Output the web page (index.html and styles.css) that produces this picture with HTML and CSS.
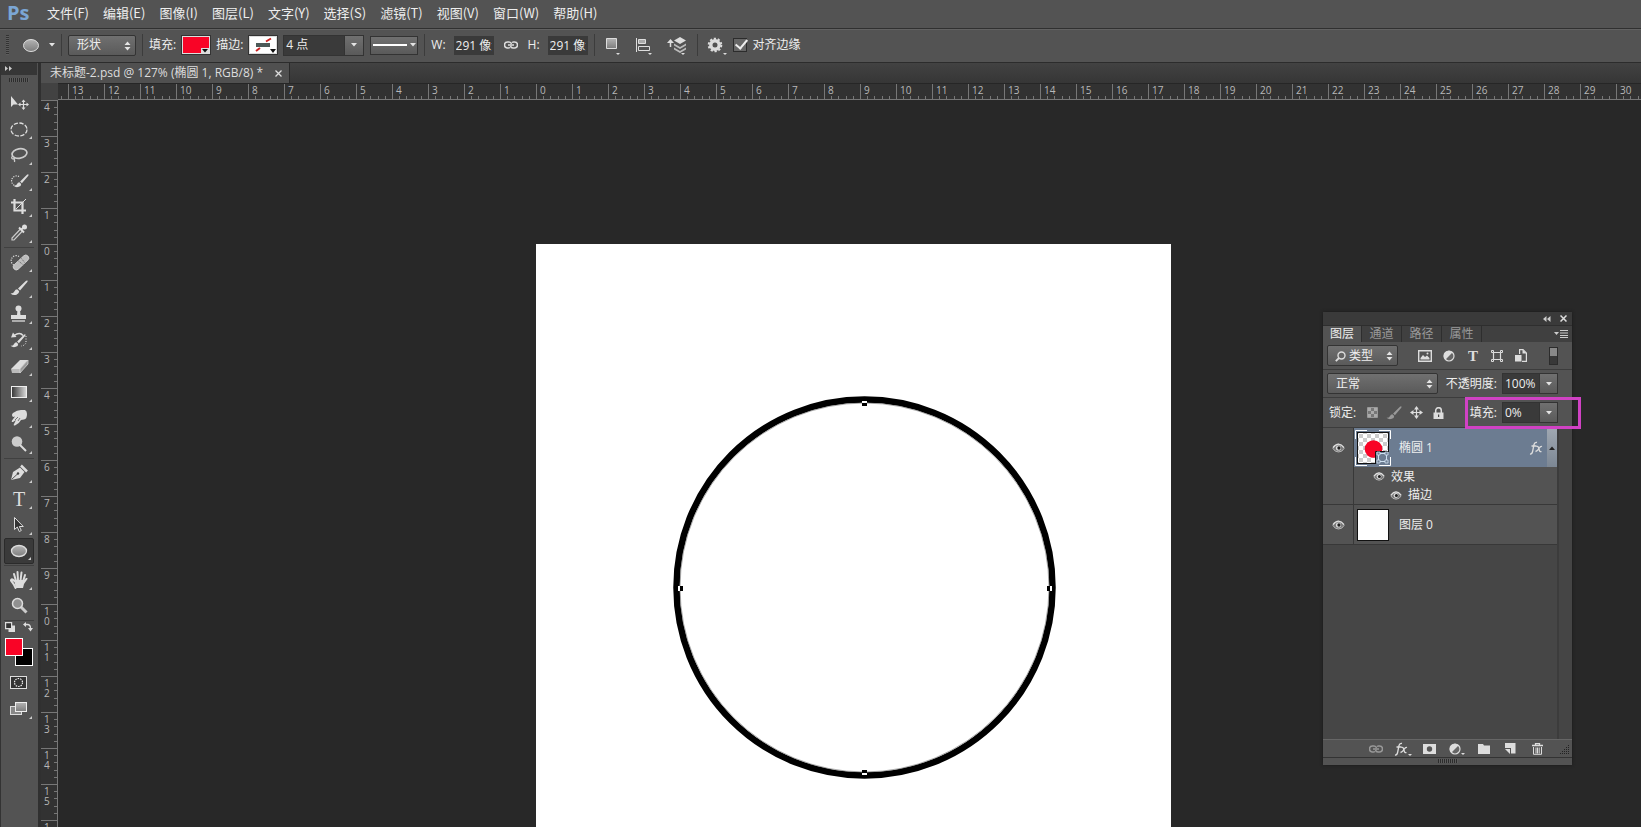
FILE: index.html
```
<!DOCTYPE html>
<html lang="zh-CN">
<head>
    <meta charset="UTF-8">
    <meta name="viewport" content="width=device-width, initial-scale=1.0">
    <title>未标题-2.psd</title>
    <link rel="stylesheet" href="styles.css">
</head>
<body>
    <!-- shared symbols -->
    <svg class="defs" width="0" height="0" aria-hidden="true">
        <defs>
            <linearGradient id="shade" x1="0" y1="0" x2="0" y2="1">
                <stop offset="0" stop-color="#b4b4b4"/><stop offset="1" stop-color="#7c7c7c"/>
            </linearGradient>
            <linearGradient id="ramp" x1="0" y1="0" x2="1" y2="0">
                <stop offset="0" stop-color="#333"/><stop offset="1" stop-color="#ddd"/>
            </linearGradient>
            <pattern id="checker" width="8" height="8" patternUnits="userSpaceOnUse">
                <rect width="8" height="8" fill="#fff"/><path d="M0 0h4v4H0zM4 4h4v4H4z" fill="#ccc"/>
            </pattern>
        </defs>
        <symbol id="updown" viewBox="0 0 7 10"><path d="M0.5 4L3.5 0.5 6.5 4zM0.5 6L3.5 9.5 6.5 6z" fill="#e4e4e4"/></symbol>
        <symbol id="caret" viewBox="0 0 6 4"><path d="M0 0h6L3 3.6z" fill="#e4e4e4"/></symbol>
        <symbol id="eye" viewBox="0 0 14 10">
            <path d="M1 5.500Q3 1 7 1t6 4.500Q11 9.300 7 9.300T1 5.500z" fill="#777" stroke="#bbb"/>
            <path d="M1 4.500Q4 .800 7 .800t6 3.700" fill="none" stroke="#ddd" stroke-width="1.400"/>
            <circle cx="7" cy="5" r="2.800" fill="#ddd"/><circle cx="7.500" cy="5" r="1.800" fill="#222"/>
        </symbol>
        <symbol id="link" viewBox="0 0 14 8">
            <path d="M6 6.500A3 3 0 0 1 4 7H3.500a3 3 0 0 1 0-6H5q2 0 2.500 2M8 1.500A3 3 0 0 1 10 1h.5a3 3 0 0 1 0 6H9Q7 7 6.500 5M4 4h6" fill="none" stroke="currentColor" stroke-width="1.500"/>
        </symbol>
        <symbol id="fx" viewBox="0 0 14 14">
            <path d="M1 13q2 .3 2.600-2.500L5 3.500Q5.600 1 8 1.500M2.500 5h5M7.500 5.500q1.500-.5 2 1.200l1 3q.5 1.500 2 .8M13 5.500q-1.500-.5-3 2T6.500 10.500" fill="none" stroke="currentColor" stroke-width="1.300"/>
        </symbol>
        <symbol id="halfcircle" viewBox="0 0 12 12">
            <circle cx="6" cy="6" r="5" fill="#666" stroke="#ddd" stroke-width="1.200"/><path d="M9.700 2.300A5.200 5.200 0 1 0 2.300 9.700z" fill="#ddd"/>
        </symbol>
        <symbol id="brush" viewBox="0 0 18 16">
            <path d="M17.500.500q-1-.3-1.700.400L8 8.500l2 2 7.300-8.600q.6-.7.200-1.400zM7.200 9.300q-2 .1-2.700 2Q3.500 13.600.500 13.500q2.500 2.300 6 1.200 2.700-.8 2.700-3.400z" fill="currentColor"/>
        </symbol>
    </svg>

    <header class="menubar">
        <span class="logo">Ps</span>
        <nav>
            <button>文件(F)</button>
            <button>编辑(E)</button>
            <button>图像(I)</button>
            <button>图层(L)</button>
            <button>文字(Y)</button>
            <button>选择(S)</button>
            <button>滤镜(T)</button>
            <button>视图(V)</button>
            <button>窗口(W)</button>
            <button>帮助(H)</button>
        </nav>
    </header>

    <div class="options">
        <span class="grip-v"></span>
        <button class="preset" aria-label="椭圆工具预设">
            <svg width="16" height="13" viewBox="0 0 16 13"><ellipse cx="8" cy="6.500" rx="7.500" ry="6" fill="url(#shade)" stroke="#ddd"/></svg>
            <svg width="6" height="4"><use href="#caret"/></svg>
        </button>
        <span class="sep"></span>
        <span class="select mode">
            <select aria-label="工具模式"><option>形状</option></select>
            <svg width="7" height="10"><use href="#updown"/></svg>
        </span>
        <span class="sep"></span>
        <span class="field">填充:
            <button class="swatch red" aria-label="填充颜色"><svg width="8" height="5" viewBox="0 0 8 5"><path d="M0 0h8v5H0z" fill="#ddd"/><path d="M1 1h6L4 4.500z" fill="#111"/></svg></button>
        </span>
        <span class="field">描边:
            <button class="swatch none" aria-label="描边颜色">
                <svg class="slash" width="26" height="16" viewBox="0 0 26 16"><path d="M6 14L10 11M16 4.500L21 1.500" stroke="#c22" stroke-width="2"/><path d="M6 6h14v4H6z" fill="#4c5a58"/></svg>
                <svg width="6" height="4"><path d="M0 0h6L3 4z" fill="#111"/></svg>
            </button>
        </span>
        <span class="combo stroke-width">
            <input type="text" value="4 点" aria-label="描边宽度">
            <button aria-label="选择宽度"><svg width="6" height="4"><use href="#caret"/></svg></button>
        </span>
        <button class="line-style" aria-label="描边类型"><i></i><svg width="6" height="4"><use href="#caret"/></svg></button>
        <span class="sep"></span>
        <label class="field size">W: <input type="text" value="291 像素"></label>
        <button class="plain" aria-label="链接"><svg class="light" width="14" height="8"><use href="#link"/></svg></button>
        <label class="field size">H: <input type="text" value="291 像素"></label>
        <span class="sep"></span>
        <button class="plain path-ops" aria-label="路径操作"><svg width="16" height="20" viewBox="0 0 16 20"><path d="M1.500 3.500h10v10h-10z" fill="url(#shade)" stroke="#ddd"/><path d="M11 18h4l-2 2z" fill="#ddd"/></svg></button>
        <button class="plain" aria-label="路径对齐"><svg width="18" height="20" viewBox="0 0 18 20"><path d="M1.500 3v14" stroke="#ddd"/><path d="M3.500 4.500h7v4h-7z" fill="#aaa" stroke="#ddd"/><path d="M3.500 11.500h11v4h-11z" fill="none" stroke="#ddd"/><path d="M13 18h4l-2 2z" fill="#ddd"/></svg></button>
        <button class="plain" aria-label="路径排列"><svg width="20" height="20" viewBox="0 0 20 20"><path d="M3.500 6v6" stroke="#ddd" stroke-width="1.500"/><path d="M0 8l3.500-4L7 8z" fill="#ddd"/><path d="M7 5.500l6-3.500 6 3.500L13 9z" fill="#ddd"/><path d="M7 8.500l6 3.500 6-3.500v2L13 14l-6-3.500zM7 12.500l6 3.500 6-3.500v2L13 18l-6-3.500z" fill="#bbb"/><path d="M14 18h4l-2 2z" fill="#ddd"/></svg></button>
        <span class="sep"></span>
        <button class="plain gear" aria-label="设置"><svg width="20" height="20" viewBox="0 0 20 20"><circle cx="8" cy="10" r="4.200" fill="none" stroke="#ddd" stroke-width="3.400"/><circle cx="8" cy="10" r="6.300" fill="none" stroke="#ddd" stroke-width="2" stroke-dasharray="2.200 1.760"/><path d="M16 18h4l-2 2z" fill="#ddd"/></svg></button>
        <label class="check"><input type="checkbox" checked>对齐边缘</label>
    </div>

    <div class="main">
        <aside class="tools">
            <div class="tools-head"><svg width="8" height="5" viewBox="0 0 8 5"><path d="M0 0l3 2.500L0 5zM4 0l3 2.500L4 5z" fill="#ccc"/></svg></div>
            <span class="grip-h"></span>
            <div class="group">
                <button class="flat" aria-label="移动工具"><svg viewBox="0 0 24 24"><path d="M4 5v11l2.500-2.500H11z" fill="#ddd"/><path d="M16.500 9v9M12 13.500h9" stroke="#ddd" stroke-width="1.200"/><path d="M14.500 11l2-2.500 2 2.500zM14.500 16.500l2 2.500 2-2.500zM13.500 11.500l-2.500 2 2.500 2zM19.500 11.500l2.500 2-2.500 2z" fill="#ddd"/></svg></button>
                <button aria-label="椭圆选框工具"><svg viewBox="0 0 24 24"><ellipse cx="12" cy="12.500" rx="8" ry="6.500" fill="none" stroke="#ddd" stroke-width="1.300" stroke-dasharray="4.200 1.500"/></svg></button>
                <button aria-label="套索工具"><svg viewBox="0 0 24 24"><ellipse cx="12.500" cy="10.500" rx="7.500" ry="4.700" transform="rotate(-10 12.500 10.500)" fill="none" stroke="#ccc" stroke-width="1.700"/><path d="M6 13q-2 1-1 2.500 1.500 1 3-.500M6.500 15q1.500 2 1 4" fill="none" stroke="#ccc" stroke-width="1.300"/></svg></button>
                <button aria-label="快速选择工具"><svg viewBox="0 0 24 24" color="#ddd"><path d="M12 7.500a5 5 0 1 0-1.500 9.300" fill="none" stroke="#ddd" stroke-width="1.200" stroke-dasharray="1.200 1.200"/><use href="#brush" x="6" y="5" width="16" height="14"/></svg></button>
                <button aria-label="裁剪工具"><svg viewBox="0 0 24 24"><path d="M7.500 4v11.500H19M4 7.500h11.500V19" fill="none" stroke="#ddd" stroke-width="2.200"/><path d="M9 14L19 4" stroke="#ddd"/></svg></button>
                <button aria-label="吸管工具"><svg viewBox="0 0 24 24"><path d="M13.500 8L5 17v2h2l8.500-9" fill="#555" stroke="#ccc" stroke-width="1.200"/><path d="M12 6.500l5 5M14 9l4.500-4.500" stroke="#ddd" stroke-width="2"/><circle cx="17.500" cy="6" r="2.500" fill="#ddd"/></svg></button>
            </div>
            <div class="group">
                <button aria-label="污点修复画笔工具"><svg viewBox="0 0 24 24"><path d="M12 6.500a5 5 0 1 0-4 9" fill="none" stroke="#ddd" stroke-width="1.200" stroke-dasharray="1.200 1.200"/><rect x="4.500" y="9.500" width="19" height="6" rx="3" transform="rotate(-43 14 12.500)" fill="#bcbcbc" stroke="#ddd" stroke-width=".7"/><path d="M11.500 11l5.500 4.500M14.500 8.500l3.500 4.500" stroke="#666" stroke-dasharray="1 1"/></svg></button>
                <button aria-label="画笔工具"><svg viewBox="0 0 24 24" color="#ddd"><use href="#brush" x="3" y="4" width="18" height="16"/></svg></button>
                <button aria-label="仿制图章工具"><svg viewBox="0 0 24 24"><circle cx="11.500" cy="6.500" r="3" fill="#ddd"/><path d="M10.500 8h2.500l.5 5h5.500v4H4v-4h6z" fill="#ddd"/><path d="M5 19h13" stroke="#ddd" stroke-width="1.300"/></svg></button>
                <button aria-label="历史记录画笔工具"><svg viewBox="0 0 24 24" color="#ddd"><path d="M7 7.500q6-4 9 0" fill="none" stroke="#ddd" stroke-width="1.500"/><path d="M4 9.500l2-5 3.500 4.500z" fill="#ddd"/><use href="#brush" x="3" y="6" width="16" height="14"/><path d="M19 8v7q-2 3-5 3" fill="none" stroke="#eee" stroke-dasharray="1 1.500"/></svg></button>
                <button aria-label="橡皮擦工具"><svg viewBox="0 0 24 24"><path d="M4 15l9-9h8l-8 9z" fill="#ddd"/><path d="M4 15h9v4H5z" fill="#bbb"/><path d="M13 15l8-9v4l-8 9z" fill="#999" stroke="#ddd" stroke-width=".7"/></svg></button>
                <button aria-label="渐变工具"><svg viewBox="0 0 24 24"><rect x="4.500" y="6.500" width="15" height="11" fill="url(#ramp)" stroke="#eee"/></svg></button>
                <button aria-label="涂抹工具"><svg viewBox="0 0 24 24"><path d="M6 7q4-3 8-3h4q2 1 2 4 0 5-3 5.500l-3 .5q-2 4-6 5.500-2 0-1-1.500l2-4-3 2q-2 .5-1-1.500l3-4-2 .5Q4 9 6 7z" fill="#ddd"/><path d="M8 14l3-3M11 15l2-3" stroke="#777"/></svg></button>
                <button aria-label="减淡工具"><svg viewBox="0 0 24 24"><circle cx="10" cy="9.500" r="5.300" fill="#ccc"/><path d="M13 13l6 6" stroke="#ddd" stroke-width="2"/></svg></button>
            </div>
            <div class="group">
                <button aria-label="钢笔工具"><svg viewBox="0 0 24 24"><path d="M4 19l2-8 7-4.500L17.500 11 13 17z" fill="#ddd"/><path d="M4.500 18.500L11 12.500" stroke="#555"/><circle cx="11" cy="12.500" r="1.200" fill="#444"/><path d="M14 4.500l6 6" stroke="#ddd" stroke-width="2.500"/></svg></button>
                <button class="type" aria-label="横排文字工具">T</button>
                <button aria-label="路径选择工具"><svg viewBox="0 0 24 24"><path d="M7.500 4.500v12l2.800-2.500 2 4.500 2-1-2-4h4z" fill="#333" stroke="#ddd"/></svg></button>
                <button class="active" aria-label="椭圆工具"><svg viewBox="0 0 24 24"><ellipse cx="12" cy="12" rx="7.500" ry="5.500" fill="url(#shade)" stroke="#ddd" stroke-width="1.300"/></svg></button>
            </div>
            <div class="group">
                <button aria-label="抓手工具"><svg viewBox="0 0 24 24"><path d="M8.500 20Q7 16 4 12.500q0-1.500 1.500-1L8 13.500M9 13L7 6M11 12.500l-.5-8.500M13.500 12.500l1-8M16 13.500l2-6.500" fill="none" stroke="#ddd" stroke-width="2" stroke-linecap="round"/><path d="M7.500 12h9.500l2-2q2-.5 1.500 1L17 16l-1 4H8.500z" fill="#ddd"/></svg></button>
                <button class="flat" aria-label="缩放工具"><svg viewBox="0 0 24 24"><path d="M14 13l5.500 5.500" stroke="#ccc" stroke-width="3"/><circle cx="10.500" cy="9.500" r="5" fill="#909090" stroke="#ddd" stroke-width="1.500"/></svg></button>
            </div>
            <div class="color-tools">
                <button aria-label="默认颜色"><svg width="10" height="10" viewBox="0 0 10 10"><path d="M3.500 3.500H10V10H3.500z" fill="#ddd"/><path d="M.6.600h6v6h-6z" fill="#333" stroke="#ddd" stroke-width="1.200"/></svg></button>
                <button aria-label="切换颜色"><svg width="10" height="10" viewBox="0 0 10 10"><path d="M2 2.500h2.500q3 0 3 4" fill="none" stroke="#ddd" stroke-width="1.300"/><path d="M3 0v5L0 2.500zM5 6h5L7.500 9.500z" fill="#ddd"/></svg></button>
            </div>
            <div class="colors">
                <button class="bg" aria-label="背景色"></button>
                <button class="fg" aria-label="前景色"></button>
            </div>
            <div class="group modes">
                <button class="flat" aria-label="快速蒙版"><svg viewBox="0 0 24 24"><rect x="3.500" y="5.500" width="16" height="12" fill="#333" stroke="#ddd"/><circle cx="11.500" cy="11.500" r="4" fill="none" stroke="#eee" stroke-width="1.200" stroke-dasharray="1.500 1"/></svg></button>
                <button aria-label="屏幕模式"><svg viewBox="0 0 24 24"><rect x="3.500" y="9.500" width="11" height="8" fill="#888" stroke="#ddd"/><rect x="8.500" y="5.500" width="11" height="9" fill="url(#shade)" stroke="#eee"/></svg></button>
            </div>
        </aside>

        <section class="document">
            <div class="tabstrip">
                <div class="doc-tab">未标题-2.psd @ 127% (椭圆 1, RGB/8) * <button aria-label="关闭"><svg width="7" height="7" viewBox="0 0 7 7"><path d="M.5.500l6 6M6.500.500l-6 6" stroke="#ddd" stroke-width="1.300"/></svg></button></div>
            </div>
            <div class="view">
                <span class="corner"></span>
                <div class="ruler-x" id="rulerX"></div>
                <div class="ruler-y" id="rulerY"></div>
                <div class="canvas">
                    <div class="artboard">
                        <svg width="383" height="383" viewBox="0 0 383 383">
                            <circle cx="191.500" cy="191.500" r="188" fill="none" stroke="#000" stroke-width="6.500"/>
                            <circle cx="191.500" cy="191.500" r="184.500" fill="none" stroke="#999" stroke-width=".8"/>
                            <path d="M189 7h5v3h-5zM189 374h5v3h-5zM7 190h3v5H7zM374 190h3v5h-3z" fill="#000"/>
                            <path d="M189 5h5v2h-5zM189 377h5v2h-5zM5 190h2v5H5zM377 190h2v5h-2z" fill="#fff"/>
                        </svg>
                    </div>
                </div>
            </div>
        </section>
    </div>

    <aside class="panel">
        <div class="panel-head">
            <button aria-label="折叠"><svg width="8" height="6" viewBox="0 0 8 6"><path d="M3.500 0v6L0 3zM7.500 0v6L4 3z" fill="#ccc"/></svg></button>
            <button aria-label="关闭"><svg width="7" height="7" viewBox="0 0 7 7"><path d="M.5.500l6 6M6.500.500l-6 6" stroke="#ddd" stroke-width="1.500"/></svg></button>
        </div>
        <div class="panel-tabs">
            <button class="on">图层</button>
            <button>通道</button>
            <button>路径</button>
            <button>属性</button>
            <button class="menu" aria-label="面板菜单"><svg width="14" height="8" viewBox="0 0 14 8"><path d="M0 2h5L2.500 5z" fill="#ccc"/><path d="M6 .5h8M6 3h8M6 5.500h8M6 7.500h8" stroke="#ccc"/></svg></button>
        </div>
        <div class="row filters">
            <span class="select kind">
                <svg class="lens" width="11" height="11" viewBox="0 0 11 11"><circle cx="6.500" cy="4.500" r="3.500" fill="none" stroke="#ddd" stroke-width="1.400"/><path d="M4 7L.800 10.200" stroke="#ddd" stroke-width="1.800"/></svg>
                <select aria-label="过滤类型"><option>类型</option></select>
                <svg width="7" height="10"><use href="#updown"/></svg>
            </span>
            <div class="filter-icons">
                <button aria-label="像素图层"><svg width="14" height="12" viewBox="0 0 14 12"><path d="M.7.700h12.600v10.600H.7z" fill="none" stroke="#ddd" stroke-width="1.400"/><path d="M2.500 9.500V8l2.500-3 2 2 2-1.500L11.500 8v1.500z" fill="#ddd"/><circle cx="9.500" cy="3.500" r="1" fill="#ddd"/></svg></button>
                <button aria-label="调整图层"><svg width="12" height="12"><use href="#halfcircle"/></svg></button>
                <button class="t" aria-label="文字图层">T</button>
                <button aria-label="形状图层"><svg width="12" height="12" viewBox="0 0 12 12"><path d="M2.500 2.500h7v7h-7z" fill="none" stroke="#ddd" stroke-width="1.200"/><path d="M.5.500h2v2h-2zM9.500.500h2v2h-2zM.5 9.500h2v2h-2zM9.500 9.500h2v2h-2z" fill="#555" stroke="#ddd"/></svg></button>
                <button aria-label="智能对象"><svg width="12" height="13" viewBox="0 0 12 13"><path d="M4.600 5V.600h3.400L11.400 4v8.400H7" fill="none" stroke="#ddd" stroke-width="1.200"/><path d="M7.500.500v4h4M0 6h6.500v6.500H0z" fill="#ddd"/></svg></button>
            </div>
            <button class="toggle" aria-label="过滤开关"></button>
        </div>
        <div class="row">
            <span class="select blend">
                <select aria-label="混合模式"><option>正常</option></select>
                <svg width="7" height="10"><use href="#updown"/></svg>
            </span>
            <label class="amount" for="opacity">不透明度:</label>
            <span class="combo">
                <input type="text" id="opacity" value="100%">
                <button aria-label="不透明度滑块"><svg width="6" height="4"><use href="#caret"/></svg></button>
            </span>
        </div>
        <div class="row locks">
            <span>锁定:</span>
            <div class="lock-icons">
                <button aria-label="锁定透明像素"><svg width="11" height="11" viewBox="0 0 11 11"><path d="M.5.500h10v10H.5z" fill="#777" stroke="#999"/><path d="M1 1h3v3H1zM7 1h3v3H7zM4 4h3v3H4zM1 7h3v3H1zM7 7h3v3H7z" fill="#aaa"/></svg></button>
                <button class="dim" aria-label="锁定图像像素"><svg width="16" height="14"><use href="#brush"/></svg></button>
                <button aria-label="锁定位置"><svg width="13" height="13" viewBox="0 0 13 13"><path d="M6.500 1v11M1 6.500h11" stroke="#ddd" stroke-width="1.200"/><path d="M4 3.500L6.500 0 9 3.500zM4 9.500L6.500 13 9 9.500zM3.500 4L0 6.500 3.500 9zM9.500 4L13 6.500 9.500 9z" fill="#ddd"/></svg></button>
                <button aria-label="锁定全部"><svg width="11" height="12" viewBox="0 0 11 12"><path d="M2.700 6V3.500a2.800 2.800 0 0 1 5.600 0V6" fill="none" stroke="#ddd" stroke-width="1.500"/><path d="M.5 5.500h10V12H.5z" fill="#ddd"/><path d="M5 7.500h1.200V10H5z" fill="#444"/></svg></button>
            </div>
            <label class="amount" for="fill">填充:</label>
            <span class="combo">
                <input type="text" id="fill" value="0%">
                <button aria-label="填充滑块"><svg width="6" height="4"><use href="#caret"/></svg></button>
            </span>
            <span class="highlight"></span>
        </div>
        <div class="layers">
            <div class="list">
                <div class="layer selected">
                    <button class="vis" aria-label="显示椭圆 1"><svg width="13" height="10"><use href="#eye"/></svg></button>
                    <div class="body">
                        <div class="title">
                            <svg class="thumb" width="36" height="36" viewBox="0 0 36 36">
                                <path d="M.5 9V.500H12M24 .500h11.500V9M.5 27v8.500H12M24 35.500h11.500V27" fill="none" stroke="#fff"/>
                                <rect x="2.500" y="2.500" width="31" height="31" fill="url(#checker)" stroke="#111"/>
                                <circle cx="18.500" cy="19" r="8.800" fill="#f90426"/>
                                <path d="M20.500 35V21.500H35V35z" fill="#6c7c91"/><path d="M20.500 34V21.500H34" fill="none" stroke="#111"/>
                                <path d="M23.500 23.500h8v8h-8z" fill="none" stroke="#cfe0f0"/><path d="M22 22h3v3h-3zM30 22h3v3h-3zM22 30h3v3h-3zM30 30h3v3h-3z" fill="#6c7c91" stroke="#cfe0f0" stroke-width=".8"/>
                            </svg>
                            <span class="name">椭圆 1</span>
                            <svg class="fx light" width="14" height="14"><use href="#fx"/></svg>
                            <button class="fold" aria-label="折叠效果"><svg width="6" height="4" viewBox="0 0 6 4"><path d="M0 4h6L3 .4z" fill="#222"/></svg></button>
                        </div>
                        <div class="effect"><svg width="12" height="9"><use href="#eye"/></svg>效果</div>
                        <div class="effect sub"><svg width="12" height="9"><use href="#eye"/></svg>描边</div>
                    </div>
                </div>
                <div class="layer">
                    <button class="vis" aria-label="显示图层 0"><svg width="13" height="10"><use href="#eye"/></svg></button>
                    <div class="body">
                        <div class="title">
                            <svg class="thumb" width="36" height="36" viewBox="0 0 36 36"><rect x="2.500" y="2.500" width="31" height="31" fill="#fff" stroke="#111"/></svg>
                            <span class="name">图层 0</span>
                        </div>
                    </div>
                </div>
            </div>
            <span class="gutter"></span>
        </div>
        <div class="panel-foot">
            <button class="dim" aria-label="链接图层"><svg width="14" height="8"><use href="#link"/></svg></button>
            <button class="drop light" aria-label="图层样式"><svg width="14" height="14"><use href="#fx"/></svg></button>
            <button aria-label="添加蒙版"><svg width="13" height="10" viewBox="0 0 13 10"><path d="M0 0h13v10H0z" fill="#ddd"/><circle cx="6.500" cy="5" r="2.700" fill="#555"/></svg></button>
            <button class="drop" aria-label="调整图层"><svg width="12" height="12"><use href="#halfcircle"/></svg></button>
            <button aria-label="新建组"><svg width="12" height="10" viewBox="0 0 12 10"><path d="M0 0h5l1 1.500h6V10H0z" fill="#ddd"/></svg></button>
            <button aria-label="新建图层"><svg width="11" height="11" viewBox="0 0 11 11"><path d="M0 0h10.500v10.500H6V5H0z" fill="#ddd"/><path d="M0 6h5v5z" fill="#ddd"/></svg></button>
            <button aria-label="删除图层"><svg width="11" height="12" viewBox="0 0 11 12"><path d="M0 2.500h11M3.500 2V.600h4V2" fill="none" stroke="#ddd" stroke-width="1.300"/><path d="M1.500 4v7.300h8V4M4 4.500v6M5.500 4.500v6M7.200 4.500v6" fill="none" stroke="#ddd"/></svg></button>
            <svg class="resize" width="10" height="10" viewBox="0 0 10 10"><path d="M0 9.500h10M2 7.500h8M4 5.500h6M6 3.500h4M8 1.500h2" stroke="#222" stroke-dasharray="1 1"/></svg>
        </div>
        <div class="panel-grip"><span class="grip-h"></span></div>
    </aside>

    <script>
        const CELL = 36;

        // Ruler marks, one cell per centimetre, as many as the window shows
        function fillRuler(id, first, length) {
            const ruler = document.getElementById(id);
            ruler.textContent = '';
            for (let i = 0; i * CELL < length; i++) {
                const cell = document.createElement('span');
                cell.textContent = Math.abs(first + i);
                ruler.appendChild(cell);
            }
        }

        function drawRulers() {
            const x = document.getElementById('rulerX');
            const y = document.getElementById('rulerY');
            fillRuler('rulerX', -14, x.clientWidth + 26);
            fillRuler('rulerY', -4, y.clientHeight);
            // the first mark lies under the corner
            x.firstChild.textContent = '';
        }

        drawRulers();
        window.addEventListener('resize', drawRulers);
    </script>
</body>
</html>
```
FILE: styles.css
```
* {
    box-sizing: border-box;
}

body {
    display: flex;
    flex-direction: column;
    height: 100vh;
    margin: 0;
    overflow: hidden;
    position: relative;
    background-color: #282828;
    color: #eee;
    font: 12px/16px "Open Sans", "Noto Sans CJK SC", sans-serif;
}

button,
input,
select {
    margin: 0;
    padding: 0;
    border: 0;
    border-radius: 0;
    background: none;
    color: inherit;
    font: inherit;
}

button {
    display: flex;
    align-items: center;
    justify-content: center;
}

svg {
    display: block;
    flex: none;
}

.defs {
    position: absolute;
}

.light {
    color: #ddd;
}

.dim {
    color: #999;
}

/* menu bar */
.menubar {
    display: flex;
    align-items: center;
    flex: none;
    height: 29px;
    padding: 0 0 2px 7px;
    background-color: #535353;
    border-bottom: 1px solid #303030;
}

.logo {
    width: 40px;
    color: #7ba6d4;
    font: bold 20px/24px "Open Sans", sans-serif;
}

.menubar nav {
    display: flex;
    gap: 14px;
    font-family: "Noto Sans CJK SC", sans-serif;
    font-size: 13px;
}

/* options bar */
.options {
    display: flex;
    align-items: center;
    gap: 6px;
    flex: none;
    height: 34px;
    padding: 0 6px 2px;
    background-color: #535353;
    border-top: 1px solid #626262;
    border-bottom: 1px solid #2c2c2c;
    white-space: nowrap;
}

.grip-v {
    width: 3px;
    height: 20px;
    background: repeating-linear-gradient(#333 0 1px, #5c5c5c 1px 2px);
}

.grip-h {
    width: 20px;
    height: 4px;
    background: repeating-linear-gradient(90deg, #2c2c2c 0 1px, #5c5c5c 1px 2px);
}

.sep {
    width: 1px;
    height: 22px;
    background-color: #3c3c3c;
}

.preset {
    gap: 10px;
    margin-left: 8px;
}

.select {
    display: flex;
    position: relative;
    height: 21px;
    border: 1px solid #333;
    border-radius: 2px;
    background: linear-gradient(#707070, #5a5a5a);
}

.select select {
    width: 100%;
    padding-left: 8px;
    appearance: none;
}

.select svg {
    position: absolute;
    top: 5px;
    right: 4px;
}

.select .lens {
    left: 7px;
    right: auto;
}

.mode {
    width: 68px;
}

.field {
    display: flex;
    align-items: center;
    gap: 6px;
}

.swatch {
    position: relative;
    width: 28px;
    height: 18px;
    border: 1px solid #ddd;
    outline: 1px solid #333;
}

.swatch svg {
    position: absolute;
    right: 0;
    bottom: 0;
}

.red {
    background-color: #f90426;
}

.none {
    background-color: #fff;
}

.combo {
    display: flex;
    height: 21px;
    border: 1px solid #333;
}

.combo input {
    width: 36px;
    padding-left: 2px;
    background-color: #3a3a3a;
}

.combo button {
    width: 19px;
    border-left: 1px solid #333;
    background: linear-gradient(#707070, #5a5a5a);
}

.stroke-width input {
    width: 60px;
}

.line-style {
    gap: 3px;
    width: 48px;
    height: 19px;
    border: 1px solid #333;
    background: linear-gradient(#707070, #5a5a5a);
}

.line-style i {
    width: 34px;
    height: 2px;
    background-color: #fff;
}

.size {
    gap: 8px;
}

.size input {
    width: 40px;
    height: 19px;
    padding: 0 2px;
    background-color: #3a3a3a;
}

.plain {
    padding: 0 4px;
}

.gear {
    padding: 0;
    margin-left: 3px;
}

.check {
    display: flex;
    align-items: center;
    gap: 6px;
}

.check input {
    width: 14px;
    height: 14px;
    border: 1px solid #2c2c2c;
    background: #666;
    appearance: none;
    position: relative;
}

.check input:checked::after {
    content: "";
    position: absolute;
    left: 4px;
    top: -2px;
    width: 5px;
    height: 10px;
    border: solid #eee;
    border-width: 0 2px 2px 0;
    transform: rotate(40deg);
}

/* work area */
.main {
    display: flex;
    flex: 1;
    min-height: 0;
}

/* toolbox */
.tools {
    display: flex;
    flex-direction: column;
    align-items: center;
    flex: none;
    width: 41px;
    padding-right: 1px;
    border-left: 1px solid #333;
    border-right: 3px solid #303030;
    background-color: #535353;
}

.tools-head {
    width: 100%;
    height: 12px;
    padding: 3px 4px;
    background-color: #363636;
}

.tools > .grip-h {
    margin: 3px 0 7px;
}

.group {
    padding: 1px 0;
    border-bottom: 1px solid #404040;
}

.group button {
    position: relative;
    width: 30px;
    height: 26px;
}

.group svg {
    width: 24px;
    height: 24px;
}

.group button::after {
    content: "";
    position: absolute;
    right: 2px;
    bottom: 3px;
    border: solid transparent;
    border-width: 0 0 3px 3px;
    border-bottom-color: #ccc;
}

.group .flat::after {
    display: none;
}

.group .active {
    border: 1px solid #2b2b2b;
    border-radius: 2px;
    background-color: #3a3a3a;
}

.group .type {
    color: #ddd;
    font: 20px/24px "Liberation Serif", serif;
}

.color-tools {
    display: flex;
    gap: 8px;
    margin-top: 1px;
}

.colors {
    position: relative;
    width: 28px;
    height: 28px;
    margin: 6px 0 3px;
}

.colors button {
    position: absolute;
    width: 18px;
    height: 18px;
    border: 1px solid #fff;
}

.colors .fg {
    left: 0;
    top: 0;
    background-color: #f90426;
}

.colors .bg {
    right: 0;
    bottom: 0;
    background-color: #000;
}

.modes {
    border: 0;
}

/* document window */
.document {
    display: flex;
    flex-direction: column;
    flex: 1;
    min-width: 0;
}

.tabstrip {
    display: flex;
    flex: none;
    height: 20px;
    background: linear-gradient(#424242, #363636);
}

.doc-tab {
    display: flex;
    gap: 12px;
    padding: 0 7px 0 9px;
    background-color: #505050;
    border-right: 1px solid #2a2a2a;
    color: #ddd;
    line-height: 20px;
}

.view {
    display: grid;
    grid-template: 17px 1fr / 17px 1fr;
    flex: 1;
    min-height: 0;
}

.corner {
    background-color: #424242;
}

.ruler-x,
.ruler-y {
    display: flex;
    overflow: hidden;
    background-color: #323232;
    color: #b8b8b8;
    font-size: 10px;
    line-height: 10px;
}

.ruler-x {
    border-top: 1px solid #262626;
    border-bottom: 1px solid #777;
}

.ruler-y {
    flex-direction: column;
    border-right: 1px solid #777;
}

.ruler-x span {
    flex: none;
    width: 36px;
    padding: 1px 3px;
    border-left: 1px solid #777;
    background:
        linear-gradient(#777, #777) 6px 100% / 1px 3px no-repeat,
        linear-gradient(#777, #777) 13px 100% / 1px 3px no-repeat,
        linear-gradient(#777, #777) 21px 100% / 1px 3px no-repeat,
        linear-gradient(#777, #777) 28px 100% / 1px 3px no-repeat;
}

.ruler-x span:first-child {
    margin-left: -26px;
}

.ruler-y span {
    flex: none;
    width: 16px;
    height: 36px;
    padding: 1px 7px 0 3px;
    border-top: 1px solid #777;
    word-break: break-all;
    background:
        linear-gradient(#777, #777) 100% 6px / 3px 1px no-repeat,
        linear-gradient(#777, #777) 100% 13px / 3px 1px no-repeat,
        linear-gradient(#777, #777) 100% 21px / 3px 1px no-repeat,
        linear-gradient(#777, #777) 100% 28px / 3px 1px no-repeat;
}

.canvas {
    position: relative;
    overflow: hidden;
    background-color: #282828;
}

.artboard {
    position: absolute;
    left: 478px;
    top: 144px;
    width: 635px;
    height: 900px;
    padding: 152px 137px;
    background-color: #fff;
}

/* floating layers panel */
.panel {
    position: absolute;
    top: 312px;
    right: 69px;
    width: 249px;
    background-color: #535353;
    box-shadow: 0 0 3px #1a1a1a;
}

.panel-head {
    display: flex;
    justify-content: flex-end;
    gap: 9px;
    height: 13px;
    padding-right: 5px;
    background-color: #3a3a3a;
}

.panel-tabs {
    display: flex;
    height: 17px;
    background-color: #404040;
    border-top: 1px solid #2e2e2e;
    color: #999;
}

.panel-tabs button {
    width: 40px;
    border-right: 1px solid #2e2e2e;
}

.panel-tabs .on {
    width: 39px;
    background-color: #535353;
    color: #eee;
}

.panel-tabs .menu {
    width: 14px;
    margin-left: auto;
    margin-right: 4px;
    border: 0;
}

.row {
    display: flex;
    align-items: center;
    position: relative;
    height: 28px;
    padding: 0 14px 0 4px;
    border-bottom: 1px solid #3c3c3c;
}

.kind {
    width: 71px;
}

.kind select {
    padding-left: 21px;
}

.filter-icons {
    display: flex;
    margin-left: 15px;
}

.filter-icons button {
    width: 24px;
}

.filter-icons .t {
    color: #ddd;
    font: bold 15px/16px "Liberation Serif", serif;
}

.toggle {
    width: 9px;
    height: 18px;
    margin-left: auto;
    border: 1px solid #2c2c2c;
    background: linear-gradient(#888 0 8px, #383838 8px);
}

.blend {
    width: 111px;
}

.amount {
    margin: 0 5px 0 auto;
}

.row .combo {
    width: 56px;
}

.locks {
    height: 30px;
    padding-left: 6px;
}

.lock-icons {
    display: flex;
    margin-left: 5px;
}

.lock-icons button {
    width: 22px;
}

.highlight {
    position: absolute;
    left: 142px;
    top: -1px;
    width: 116px;
    height: 32px;
    border: 3px solid #d042c4;
    pointer-events: none;
}

.layers {
    display: flex;
    min-height: 311px;
}

.list {
    flex: 1;
    background-color: #464646;
}

.layer {
    display: flex;
    background-color: #535353;
    border-bottom: 1px solid #383838;
}

.vis {
    width: 30px;
    height: 39px;
}

.body {
    flex: 1;
    border-left: 1px solid #383838;
}

.title {
    display: flex;
    align-items: center;
    height: 39px;
    padding-left: 1px;
}

.selected .title {
    background-color: #6c7c91;
}

.name {
    margin-left: 8px;
}

.fx {
    margin-left: auto;
    margin-right: 4px;
}

.fold {
    align-self: stretch;
    width: 10px;
    background: linear-gradient(#a0a8b2, #7c8794);
}

.effect {
    display: flex;
    align-items: center;
    gap: 6px;
    height: 19px;
    padding-left: 19px;
}

.sub {
    height: 18px;
    padding-left: 36px;
}

.gutter {
    width: 15px;
    border-left: 2px solid #3c3c3c;
    background-color: #454545;
}

.panel-foot {
    display: flex;
    align-items: center;
    position: relative;
    height: 19px;
    padding-left: 39px;
    border-top: 1px solid #666;
    border-bottom: 1px solid #333;
}

.panel-foot button {
    width: 27px;
}

.drop::after {
    content: "";
    align-self: flex-end;
    border: 2px solid transparent;
    border-top-color: #ddd;
    border-bottom: 0;
}

.resize {
    margin-left: auto;
    margin-right: 2px;
}

.panel-grip {
    display: flex;
    justify-content: center;
    height: 7px;
    padding-top: 1px;
}
```
